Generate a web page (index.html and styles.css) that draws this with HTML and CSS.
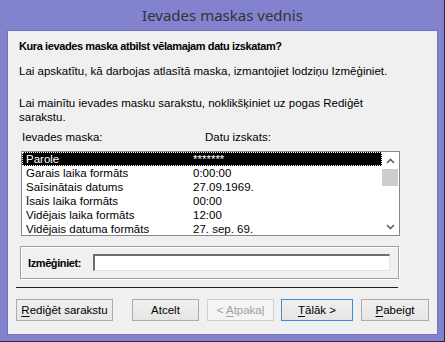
FILE: index.html
```html
<!DOCTYPE html>
<html lang="lv">
<head>
    <meta charset="UTF-8">
    <title>Ievades maskas vednis</title>
    <link rel="stylesheet" href="styles.css">
</head>
<body>
    <div class="window">
        <div class="title-bar">Ievades maskas vednis</div>
        <div class="content">
            <p class="question">Kura ievades maska atbilst vēlamajam datu izskatam?</p>
            <p class="hint">Lai apskatītu, kā darbojas atlasītā maska, izmantojiet lodziņu Izmēģiniet.</p>
            <p class="hint second">Lai mainītu ievades masku sarakstu, noklikšķiniet uz pogas Rediģēt sarakstu.</p>

            <div class="list-labels">
                <span class="col-name">Ievades maska:</span>
                <span>Datu izskats:</span>
            </div>

            <div class="listbox">
                <div class="rows">
                    <div class="row selected"><span class="col-name">Parole</span><span>*******</span></div>
                    <div class="row"><span class="col-name">Garais laika formāts</span><span>0:00:00</span></div>
                    <div class="row"><span class="col-name">Saīsinātais datums</span><span>27.09.1969.</span></div>
                    <div class="row"><span class="col-name">Īsais laika formāts</span><span>00:00</span></div>
                    <div class="row"><span class="col-name">Vidējais laika formāts</span><span>12:00</span></div>
                    <div class="row"><span class="col-name">Vidējais datuma formāts</span><span>27. sep. 69.</span></div>
                </div>
                <div class="scrollbar">
                    <div class="arrow">
                        <svg width="9" height="6" viewBox="0 0 9 6"><path d="M1 5 L4.5 1.5 L8 5" fill="none" stroke="#606060" stroke-width="1.6"/></svg>
                    </div>
                    <div class="thumb"></div>
                    <div class="track"></div>
                    <div class="arrow">
                        <svg width="9" height="6" viewBox="0 0 9 6"><path d="M1 1 L4.5 4.5 L8 1" fill="none" stroke="#606060" stroke-width="1.6"/></svg>
                    </div>
                </div>
            </div>

            <div class="try-box">
                <label class="try-label">Izmēģiniet:</label>
                <div class="try-input"></div>
            </div>

            <div class="separator"></div>

            <div class="buttons">
                <button class="btn btn-edit"><u>R</u>ediģēt sarakstu</button>
                <button class="btn btn-cancel">Atcelt</button>
                <button class="btn btn-back" disabled>&lt; <u>A</u>tpakaļ</button>
                <button class="btn btn-next default"><u>T</u>ālāk &gt;</button>
                <button class="btn btn-finish"><u>P</u>abeigt</button>
            </div>
        </div>
    </div>
</body>
</html>
```

FILE: styles.css
```css
body {
    margin: 0;
    font-family: 'Liberation Sans', Arial, sans-serif;
    font-size: 11.5px;
    color: #000;
}

.window {
    width: 431px;
    height: 341px;
    background: #8282cf;
    border-right: 1px solid #2a2a3a;
    border-bottom: 1px solid #2a2a3a;
    padding: 0 6px 0 7px;
    display: flex;
    flex-direction: column;
}

.title-bar {
    height: 30px;
    line-height: 30px;
    text-align: center;
    font-family: 'Noto Sans', 'Open Sans', sans-serif;
    font-size: 15px;
    color: #333;
}

.content {
    background: #f0f0f0;
    border: 1px solid #7272bd;
    height: 303px;
}

p {
    margin: 0;
    line-height: 14px;
}

.question {
    font-weight: bold;
    font-size: 11px;
    letter-spacing: -0.4px;
    margin: 8px 0 0 11px;
}

.hint {
    margin: 11px 0 0 11px;
}

.hint.second {
    margin-top: 18px;
    width: 360px;
}

.list-labels {
    display: flex;
    margin: 6px 0 0 14px;
    line-height: 14px;
}

.list-labels .col-name {
    width: 183px;
}

.listbox {
    display: flex;
    margin: 7px 0 0 13px;
    width: 377px;
    height: 83px;
    border: 1px solid #828790;
    background: #fff;
}

.rows {
    flex: 1;
    overflow: hidden;
}

.row {
    display: flex;
    height: 14px;
    line-height: 14px;
    padding-left: 4px;
    white-space: nowrap;
}

.row .col-name {
    width: 167px;
}

.row.selected {
    background: #000;
    color: #fff;
    outline: 1px dotted #fff;
    outline-offset: -1px;
}

.scrollbar {
    width: 17px;
    display: flex;
    flex-direction: column;
    background: #fff;
}

.arrow {
    height: 17px;
    display: flex;
    align-items: center;
    justify-content: center;
}

.thumb {
    height: 17px;
    margin-right: 1px;
    background: #cdcdcd;
}

.track {
    flex: 1;
}

.try-box {
    display: flex;
    align-items: center;
    margin: 10px 0 0 12px;
    width: 377px;
    height: 31px;
    border: 1px solid #a0a0a0;
    box-shadow: 1px 1px 0 #fff, inset 1px 1px 0 #fff;
}

.try-label {
    font-weight: bold;
    font-size: 11px;
    letter-spacing: -0.4px;
    margin-left: 7px;
    width: 65px;
}

.try-input {
    width: 294px;
    height: 14px;
    background: #fff;
    border-top: 2px solid #6d6d6d;
    border-left: 2px solid #6d6d6d;
    border-right: 1px solid #e3e3e3;
    border-bottom: 1px solid #e3e3e3;
}

.separator {
    margin: 8px 0 0 8px;
    width: 382px;
    height: 1px;
    background: #1e1e1e;
}

.buttons {
    display: flex;
    margin: 11px 0 0 8px;
}

.btn {
    height: 22px;
    font-family: inherit;
    font-size: 11.5px;
    color: #000;
    border: 1px solid #acacac;
    background: linear-gradient(#f0f0f0, #e5e5e5);
    padding: 0;
}

.btn u {
    text-decoration-thickness: 1px;
    text-underline-offset: 2px;
}

.btn-edit {
    width: 97px;
}

.btn-cancel {
    width: 67px;
    margin-left: 19px;
}

.btn-back {
    width: 67px;
    margin-left: 8px;
    color: #a0a0a0;
    border-color: #cfcfcf;
    background: #f4f4f4;
}

.btn-next {
    width: 72px;
    margin-left: 7px;
}

.btn.default {
    border-color: #3c8bd9;
}

.btn-finish {
    width: 68px;
    margin-left: 8px;
}
```
